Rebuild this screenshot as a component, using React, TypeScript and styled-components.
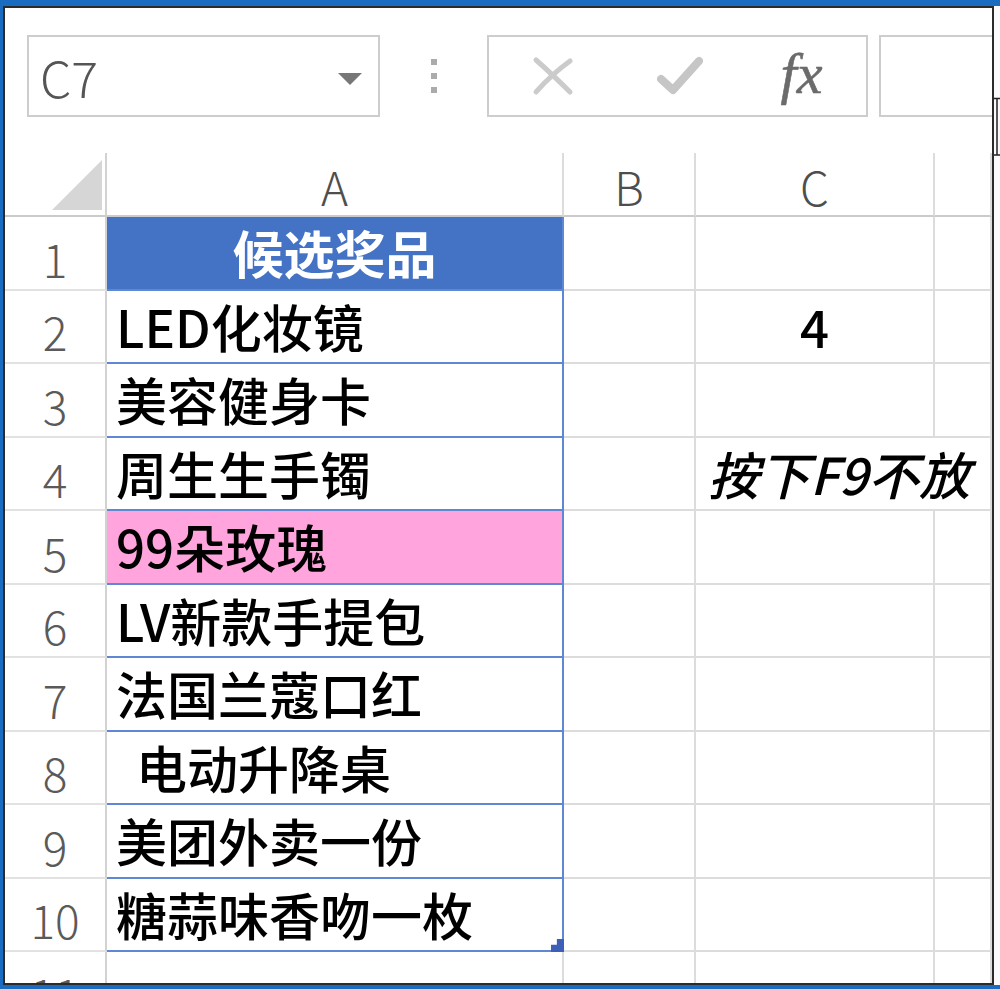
import React from 'react';
import styled, { createGlobalStyle, css } from 'styled-components';

const GlobalStyle = createGlobalStyle`
  * { box-sizing: border-box; }
  body {
    margin: 0;
    background: #ffffff;
    font-family: "Noto Sans CJK SC", "Noto Sans", sans-serif;
  }
`;

const BLUE_FRAME = '#1a6cc1';
const GRID = '#dcdcdc';
const TABLE_LINE = '#5f88d3';

const Frame = styled.div`
  width: 1000px;
  height: 989px;
  display: flex;
  background: #fff;
  border-top: 6px solid ${BLUE_FRAME};
  border-left: 3px solid ${BLUE_FRAME};
  border-bottom: 4px solid ${BLUE_FRAME};
`;

const Window = styled.div`
  flex: 1;
  min-width: 0;
  display: flex;
  flex-direction: column;
  overflow: hidden;
  background: #fff;
  border: 2px solid #2b2b2b;
`;

const Gutter = styled.div`
  width: 6px;
  position: relative;
  background: #fbfbfb;
`;

const Cursor = styled.svg`
  position: absolute;
  top: 91px;
  left: 0;
`;

/* ---------- formula bar ---------- */

const Toolbar = styled.div`
  height: 145px;
  flex-shrink: 0;
  display: flex;
  align-items: flex-start;
  padding: 27px 0 0 22px;

  & > * {
    flex-shrink: 0;
  }
`;

const NameBox = styled.div`
  width: 353px;
  height: 82px;
  border: 2px solid #cdcdcd;
  display: flex;
  align-items: center;
  justify-content: space-between;
  padding: 0 16px 0 11px;
  font-family: "Noto Sans CJK SC", "Noto Sans", sans-serif;
  font-weight: 300;
  font-size: 50px;
  color: #555;
`;

const DropArrow = styled.div`
  width: 0;
  height: 0;
  margin-top: 6px;
  border-left: 12px solid transparent;
  border-right: 12px solid transparent;
  border-top: 12px solid #777;
`;

const Grip = styled.div`
  width: 107px;
  height: 82px;
  display: flex;
  flex-direction: column;
  align-items: center;
  justify-content: center;
  gap: 8px;
`;

const GripDot = styled.span`
  width: 6px;
  height: 6px;
  background: #ababab;
`;

const FxButtons = styled.div`
  width: 381px;
  height: 82px;
  border: 2px solid #cdcdcd;
  display: grid;
  grid-template-columns: 127px 127px 1fr;
  align-items: center;
  justify-items: center;
`;

const FxLabel = styled.span`
  font-family: "Liberation Serif", "DejaVu Serif", serif;
  font-style: italic;
  font-weight: 400;
  font-size: 58px;
  line-height: 1;
  color: #6b6b6b;
  margin: -4px 0 0 -6px;
  -webkit-text-stroke: 0.6px #6b6b6b;
`;

const FormulaInput = styled.div`
  width: 200px;
  height: 82px;
  margin-left: 11px;
  border: 2px solid #cdcdcd;
`;

/* ---------- sheet ---------- */

const Sheet = styled.div`
  display: grid;
  grid-template-columns: 102px 457px 132px 239px 1fr;
  grid-template-rows: 64px repeat(11, 73.5px);
`;

const Corner = styled.div`
  display: flex;
  justify-content: flex-end;
  align-items: flex-end;
  padding: 0 3px 5px 0;
  border-right: 2px solid #d2d2d2;
  border-bottom: 2px solid #cbcbcb;
`;

const headerText = css`
  font-family: "Noto Sans CJK SC", "Noto Sans", sans-serif;
  font-weight: 300;
  color: #4e4e4e;
  line-height: 1;
`;

const ColHeader = styled.div`
  ${headerText};
  font-size: 46px;
  display: flex;
  align-items: center;
  justify-content: center;
  padding-top: 4px;
  border-right: 2px solid ${GRID};
  border-bottom: 2px solid #cbcbcb;
`;

const RowHeader = styled.div`
  ${headerText};
  font-size: 46px;
  color: #5a5a5a;
  display: flex;
  align-items: center;
  justify-content: center;
  padding-top: 10px;
  border-right: 2px solid #d2d2d2;
  border-bottom: 2px solid #e2e2e2;
`;

const cellText = css`
  font-family: "Noto Sans CJK SC", "Noto Sans", sans-serif;
  font-size: 51px;
  font-weight: 500;
  line-height: 1;
  color: #000;
  white-space: pre;
`;

const ACell = styled.div<{ $fill?: 'head' | 'pink' }>`
  ${cellText};
  position: relative;
  display: flex;
  align-items: center;
  padding: 0 0 0 9px;
  border-right: 2px solid ${TABLE_LINE};
  border-bottom: 2px solid ${TABLE_LINE};
  ${(p) =>
    p.$fill === 'head' &&
    css`
      background: #4472c4;
      color: #fff;
      font-weight: 700;
      justify-content: center;
      padding-left: 0;
      border-color: #4472c4 ${TABLE_LINE} ${TABLE_LINE} #4472c4;
    `}
  ${(p) =>
    p.$fill === 'pink' &&
    css`
      background: #ffa4dc;
    `}
`;

const Cell = styled.div<{ $align?: 'center' | 'left'; $italic?: boolean; $span?: number }>`
  ${cellText};
  display: flex;
  align-items: center;
  justify-content: ${(p) => (p.$align === 'center' ? 'center' : 'flex-start')};
  padding: 0 0 0 ${(p) => (p.$align === 'left' ? '12px' : '0')};
  font-style: ${(p) => (p.$italic ? 'italic' : 'normal')};
  grid-column: ${(p) => (p.$span ? `span ${p.$span}` : 'auto')};
  border-right: 2px solid ${GRID};
  border-bottom: 2px solid ${GRID};
`;

const FillHandle = styled.span`
  position: absolute;
  right: -2px;
  bottom: -2px;
  width: 13px;
  height: 13px;
  background: #3d5fb8;
  clip-path: polygon(45% 0, 100% 0, 100% 100%, 0 100%, 0 45%, 45% 45%);
`;

const prizes = [
  'LED化妆镜',
  '美容健身卡',
  '周生生手镯',
  '99朵玫瑰',
  'LV新款手提包',
  '法国兰蔻口红',
  ' \u2006电动升降桌',
  '美团外卖一份',
  '糖蒜味香吻一枚',
];

const CancelIcon = () => (
  <svg width="42" height="40" viewBox="0 0 42 40">
    <path d="M4 4 Q20 18 38 36" stroke="#cbcbcb" strokeWidth="5" fill="none" strokeLinecap="round" />
    <path d="M38 5 Q20 18 4 36" stroke="#cbcbcb" strokeWidth="5" fill="none" strokeLinecap="round" />
  </svg>
);

const EnterIcon = () => (
  <svg width="46" height="40" viewBox="0 0 46 40">
    <path d="M4 23 L16 34 L42 5" stroke="#c6c6c6" strokeWidth="8" fill="none" strokeLinecap="round" strokeLinejoin="round" />
  </svg>
);

const SelectAll = () => (
  <svg width="50" height="50" viewBox="0 0 50 50">
    <polygon points="50,0 50,50 0,50" fill="#d6d6d6" />
  </svg>
);

export default function App() {
  return (
    <>
      <GlobalStyle />
      <Frame>
        <Window>
          <Toolbar>
            <NameBox>
              C7
              <DropArrow />
            </NameBox>
            <Grip>
              <GripDot />
              <GripDot />
              <GripDot />
            </Grip>
            <FxButtons>
              <CancelIcon />
              <EnterIcon />
              <FxLabel>fx</FxLabel>
            </FxButtons>
            <FormulaInput />
          </Toolbar>

          <Sheet>
            <Corner>
              <SelectAll />
            </Corner>
            <ColHeader>A</ColHeader>
            <ColHeader>B</ColHeader>
            <ColHeader>C</ColHeader>
            <ColHeader />

            <RowHeader>1</RowHeader>
            <ACell $fill="head">候选奖品</ACell>
            <Cell />
            <Cell />
            <Cell />

            {prizes.map((prize, i) => {
              const row = i + 2;
              return (
                <React.Fragment key={row}>
                  <RowHeader>{row}</RowHeader>
                  <ACell $fill={row === 5 ? 'pink' : undefined}>
                    {prize}
                    {row === 10 && <FillHandle />}
                  </ACell>
                  <Cell />
                  {row === 2 && (
                    <>
                      <Cell $align="center">4</Cell>
                      <Cell />
                    </>
                  )}
                  {row === 4 && (
                    <Cell $align="left" $italic $span={2}>
                      按下F9不放
                    </Cell>
                  )}
                  {row !== 2 && row !== 4 && (
                    <>
                      <Cell />
                      <Cell />
                    </>
                  )}
                </React.Fragment>
              );
            })}

            <RowHeader>11</RowHeader>
            <Cell />
            <Cell />
            <Cell />
            <Cell />
          </Sheet>
        </Window>
        <Gutter>
          <Cursor width="6" height="60" viewBox="0 0 6 60">
            <path d="M6 1.5 H3 V58 H6 M0 1.5 H3 M0 58 H3" stroke="#222" strokeWidth="1.5" fill="none" />
          </Cursor>
        </Gutter>
      </Frame>
    </>
  );
}
